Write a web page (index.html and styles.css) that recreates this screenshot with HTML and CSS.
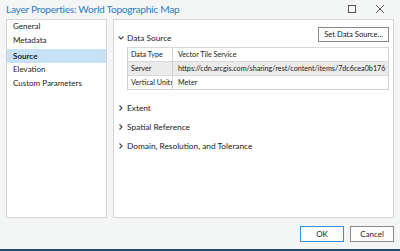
FILE: index.html
```html
<!DOCTYPE html>
<html>
<head lang="en">
    <meta charset="UTF-8">
    <title>Layer Properties</title>
    <link rel="stylesheet" href="styles.css">
</head>
<body>
    <div id="window">
        <div class="titlebar">
            <span class="title">Layer Properties: World Topographic Map</span>
            <span class="tbtn"><svg width="10" height="10" viewBox="0 0 10 10"><rect x="1.5" y="1.5" width="7" height="7" fill="none" stroke="#555" stroke-width="1"/></svg></span>
            <span class="tbtn"><svg width="10" height="10" viewBox="0 0 10 10"><path d="M1 1L9 9M9 1L1 9" stroke="#555" stroke-width="1"/></svg></span>
        </div>
        <div class="main">
            <div class="nav">
                <div class="navItem">General</div>
                <div class="navItem">Metadata</div>
                <div class="navItem active">Source</div>
                <div class="navItem">Elevation</div>
                <div class="navItem">Custom Parameters</div>
            </div>
            <div class="content">
                <div class="topRow">
                    <div class="secHead"><svg class="chev" width="8" height="6" viewBox="0 0 8 6"><path d="M1.5 1.5L4 4L6.5 1.5" fill="none" stroke="#444" stroke-width="1.1"/></svg>Data Source</div>
                    <div class="btn">Set Data Source...</div>
                </div>
                <table class="props">
                    <tr><td class="key">Data Type</td><td>Vector Tile Service</td></tr>
                    <tr class="alt"><td class="key">Server</td><td>https://cdn.arcgis.com/sharing/rest/content/items/7dc6cea0b176</td></tr>
                    <tr><td class="key">Vertical Units</td><td>Meter</td></tr>
                </table>
                <div class="sec"><svg class="chev" width="8" height="8" viewBox="0 0 8 8"><path d="M2.5 1.5L5 4L2.5 6.5" fill="none" stroke="#444" stroke-width="1.1"/></svg>Extent</div>
                <div class="sec"><svg class="chev" width="8" height="8" viewBox="0 0 8 8"><path d="M2.5 1.5L5 4L2.5 6.5" fill="none" stroke="#444" stroke-width="1.1"/></svg>Spatial Reference</div>
                <div class="sec"><svg class="chev" width="8" height="8" viewBox="0 0 8 8"><path d="M2.5 1.5L5 4L2.5 6.5" fill="none" stroke="#444" stroke-width="1.1"/></svg>Domain, Resolution, and Tolerance</div>
            </div>
        </div>
        <div class="footer">
            <div class="btn big ok">OK</div>
            <div class="btn big">Cancel</div>
        </div>
        <div class="desktop"></div>
    </div>
</body>
</html>
```

FILE: styles.css
```css
*{
    margin: 0;
    padding: 0;
    box-sizing: border-box;
}
body{
    font-family: Lato, "Open Sans", sans-serif;
    color: #222222;
}
#window{
    width: 400px;
    height: 251px;
    background: #f4f5f5;
    display: flex;
    flex-direction: column;
    overflow: hidden;
}
.titlebar{
    height: 19px;
    display: flex;
    align-items: center;
    padding: 0 6px 0 6px;
}
.title{
    flex: 1;
    font-size: 10.2px;
    letter-spacing: -0.3px;
    color: #2c7dc4;
    margin-top: -2px;
}
.tbtn{
    width: 28px;
    display: flex;
    justify-content: center;
    margin-top: -2px;
}
.main{
    height: 199px;
    display: flex;
    gap: 6px;
    padding: 0 6px;
}
.nav{
    width: 101px;
    background: #ffffff;
    border: solid 1px #d5d5d5;
}
.navItem{
    height: 14.3px;
    line-height: 13px;
    font-size: 8px;
    padding-left: 6px;
}
.navItem.active{
    background: #c4e1f6;
    font-weight: bold;
    line-height: 14px;
}
.content{
    flex: 1;
    background: #ffffff;
    border: solid 1px #d5d5d5;
    padding: 7px 4px 0 3px;
}
.topRow{
    display: flex;
    justify-content: space-between;
    align-items: flex-end;
    height: 15px;
}
.secHead, .sec{
    font-size: 8.3px;
    display: flex;
    align-items: center;
}
.secHead{
    height: 12px;
    margin-bottom: -2px;
}
.sec{
    height: 19px;
}
.chev{
    margin-right: 2px;
}
.btn{
    height: 15px;
    line-height: 13px;
    border: solid 1px #8a8a8a;
    background: #fdfdfd;
    font-size: 7.6px;
    padding: 0 5px;
    text-align: center;
}
.props{
    border-collapse: collapse;
    table-layout: fixed;
    width: 262px;
    margin: 5px 0 8px 10px;
    font-size: 7.2px;
    border: solid 1px #d0d0d0;
}
.props td{
    height: 14px;
    padding: 0 5px;
    white-space: nowrap;
    overflow: hidden;
    border-top: solid 1px #d8d8d8;
}
.props td.key{
    width: 45px;
    padding: 0 2px 0 3px;
    border-right: solid 1px #d0d0d0;
}
.props tr.alt td{
    background: #ebebeb;
}
.footer{
    height: 31px;
    display: flex;
    justify-content: flex-end;
    align-items: center;
    gap: 6px;
    padding: 0 6px;
}
.btn.big{
    width: 44px;
    height: 16px;
    line-height: 14px;
    padding: 0;
    font-size: 8px;
}
.btn.ok{
    border-color: #3a8fd8;
}
.desktop{
    flex: 1;
    background: #1d4f73;
}
```
